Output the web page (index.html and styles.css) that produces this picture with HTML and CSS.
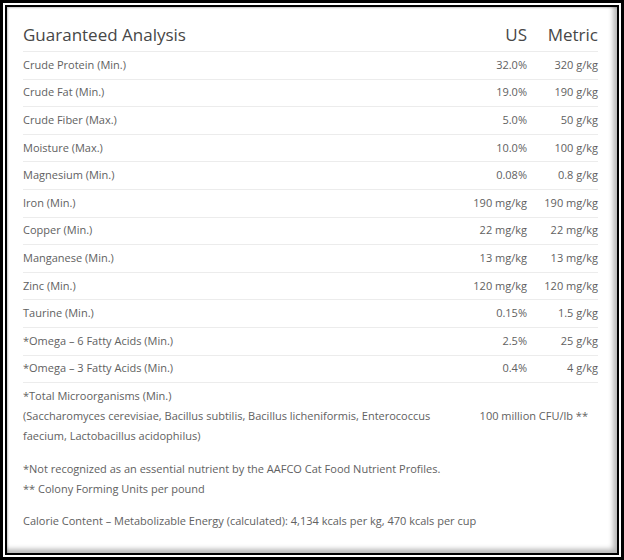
FILE: index.html
```html
<!DOCTYPE html>
<html>
<head>
<meta charset="utf-8">
<link rel="stylesheet" href="styles.css">
</head>
<body>
<div class="frame">
  <div class="inner">
    <div class="ga-head">
      <div class="ga-title">Guaranteed Analysis</div>
      <div class="ga-col">US</div>
      <div class="ga-col">Metric</div>
    </div>
    <div class="ga-row"><span class="name">Crude Protein (Min.)</span><span class="us">32.0%</span><span class="met">320 g/kg</span></div>
    <div class="ga-row"><span class="name">Crude Fat (Min.)</span><span class="us">19.0%</span><span class="met">190 g/kg</span></div>
    <div class="ga-row"><span class="name">Crude Fiber (Max.)</span><span class="us">5.0%</span><span class="met">50 g/kg</span></div>
    <div class="ga-row"><span class="name">Moisture (Max.)</span><span class="us">10.0%</span><span class="met">100 g/kg</span></div>
    <div class="ga-row"><span class="name">Magnesium (Min.)</span><span class="us">0.08%</span><span class="met">0.8 g/kg</span></div>
    <div class="ga-row"><span class="name">Iron (Min.)</span><span class="us">190 mg/kg</span><span class="met">190 mg/kg</span></div>
    <div class="ga-row"><span class="name">Copper (Min.)</span><span class="us">22 mg/kg</span><span class="met">22 mg/kg</span></div>
    <div class="ga-row"><span class="name">Manganese (Min.)</span><span class="us">13 mg/kg</span><span class="met">13 mg/kg</span></div>
    <div class="ga-row"><span class="name">Zinc (Min.)</span><span class="us">120 mg/kg</span><span class="met">120 mg/kg</span></div>
    <div class="ga-row"><span class="name">Taurine (Min.)</span><span class="us">0.15%</span><span class="met">1.5 g/kg</span></div>
    <div class="ga-row"><span class="name">*Omega – 6 Fatty Acids (Min.)</span><span class="us">2.5%</span><span class="met">25 g/kg</span></div>
    <div class="ga-row"><span class="name">*Omega – 3 Fatty Acids (Min.)</span><span class="us">0.4%</span><span class="met">4 g/kg</span></div>
    <div class="ga-micro">
      <div class="micro-name">
        <span class="line">*Total Microorganisms (Min.)</span>
        <span class="line">(Saccharomyces cerevisiae, Bacillus subtilis, Bacillus licheniformis, Enterococcus</span>
        <span class="line">faecium, Lactobacillus acidophilus)</span>
      </div>
      <div class="micro-val">100 million CFU/lb **</div>
    </div>
    <div class="notes">
      <p class="note">*Not recognized as an essential nutrient by the AAFCO Cat Food Nutrient Profiles.</p>
      <p class="note">** Colony Forming Units per pound</p>
    </div>
    <p class="calorie">Calorie Content – Metabolizable Energy (calculated): 4,134 kcals per kg, 470 kcals per cup</p>
  </div>
</div>
</body>
</html>
```
FILE: styles.css
```css
html, body {
  margin: 0;
  padding: 0;
  background: #ffffff;
}
.frame {
  width: 624px;
  height: 560px;
  box-sizing: border-box;
  border: 3px solid #000;
  padding: 2px;
  background: #fff;
}
.inner {
  height: 100%;
  box-sizing: border-box;
  border: 2px solid #000;
  background: #fff;
  box-shadow: inset -4px -4px 5px rgba(0,0,0,0.28), inset 1px 1px 2px rgba(0,0,0,0.22);
  padding: 0 19px 0 16px;
  font-family: "Open Sans", "Liberation Sans", sans-serif;
  font-size: 11px;
  color: #616161;
}
.ga-head {
  display: grid;
  grid-template-columns: 1fr 90px 71px;
  align-items: end;
  padding-top: 17px;
  height: 44px;
  box-sizing: border-box;
  padding-bottom: 6px;
  color: #474747;
  font-size: 17px;
  font-weight: 500;
  line-height: 20px;
}
.ga-col {
  text-align: right;
}
.ga-row {
  display: grid;
  grid-template-columns: 1fr 90px 71px;
  align-items: center;
  height: 27.6px;
  box-sizing: border-box;
  border-top: 1px solid #ececec;
  padding-bottom: 2px;
}
.ga-row .us, .ga-row .met {
  text-align: right;
}
.ga-micro {
  display: grid;
  grid-template-columns: 1fr 161px;
  align-items: center;
  border-top: 1px solid #ececec;
  padding-top: 3px;
  line-height: 20px;
}
.micro-name .line {
  display: block;
  white-space: nowrap;
}
.micro-val {
  text-align: right;
  padding-right: 10px;
}
.notes {
  margin-top: 13px;
}
.note {
  margin: 0;
  line-height: 20px;
}
.calorie {
  margin: 12px 0 0;
  line-height: 20px;
}
```
